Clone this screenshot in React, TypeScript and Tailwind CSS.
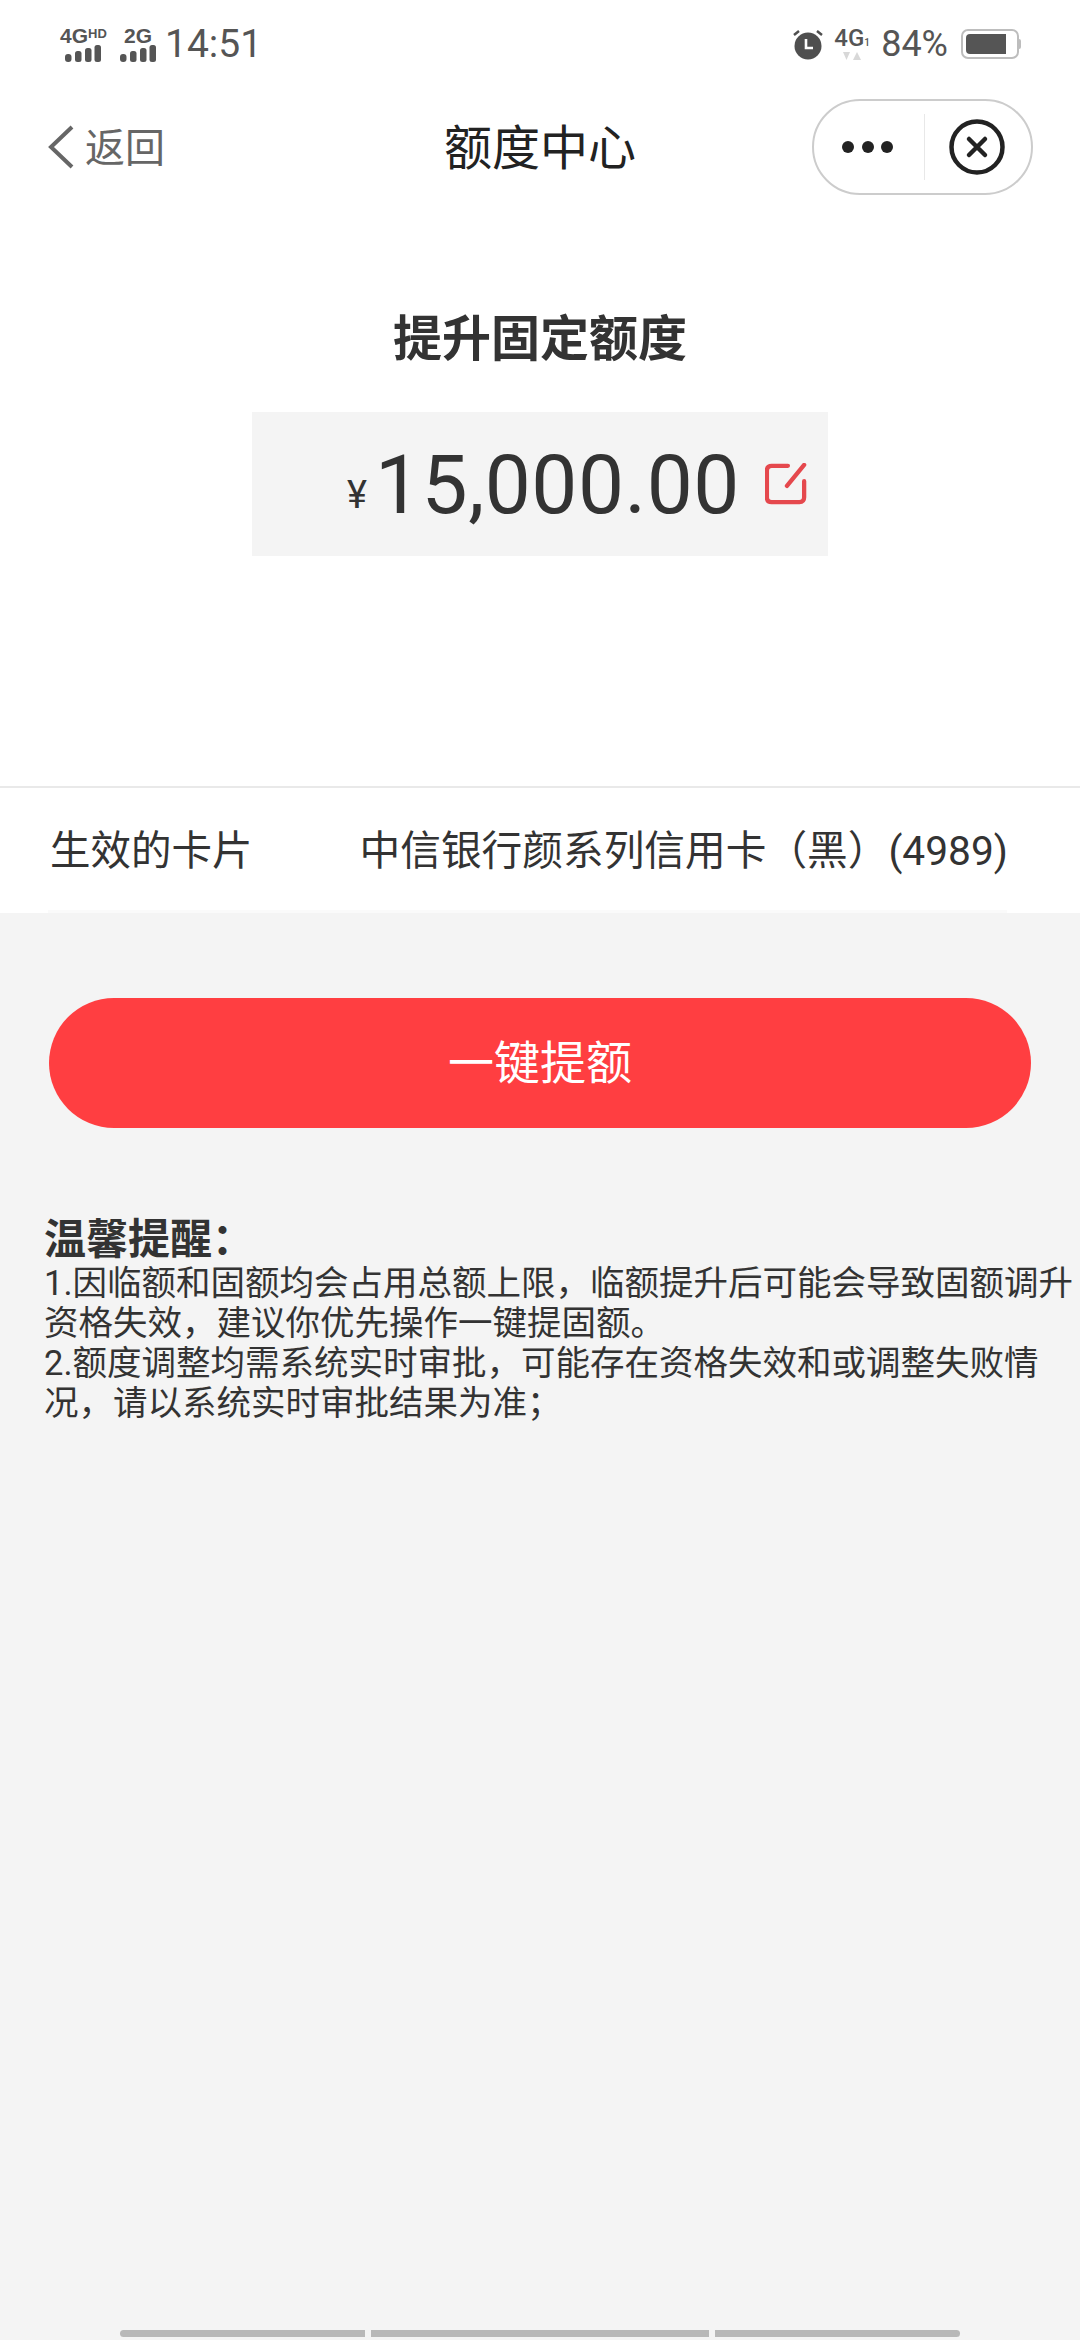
import React from "react";

const CJK = "font-['Roboto','Noto_Sans_CJK_SC',sans-serif]";

function Bars({ className }: { className?: string }) {
  return (
    <svg width="36" height="17" viewBox="0 0 36 17" className={className}>
      <rect x="0" y="9" width="6.5" height="8" rx="3" fill="#555" />
      <rect x="10" y="6" width="6.5" height="11" rx="2.5" fill="#555" />
      <rect x="20" y="3" width="6.5" height="14" rx="2.5" fill="#555" />
      <rect x="29.5" y="0" width="6.5" height="17" rx="2.5" fill="#555" />
    </svg>
  );
}

function Alarm() {
  return (
    <svg width="30" height="33" viewBox="0 0 30 33">
      <circle cx="15" cy="18" r="13.5" fill="#4f4f4f" />
      <path d="M1 7 L6 3 M29 7 L24 3" stroke="#4f4f4f" strokeWidth="2.5" />
      <path d="M13 11 V20 H20" stroke="#fff" strokeWidth="2.6" fill="none" />
    </svg>
  );
}

function Battery() {
  return (
    <div className="flex items-center">
      <div className="w-[58px] h-[30px] border-2 border-[#bdbdbd] rounded-[7px] p-[3px] pr-[11px]">
        <div className="h-full bg-[#555] rounded-l-[4px]" />
      </div>
      <div className="w-[2px] h-[10px] bg-[#bdbdbd] rounded-r-sm" />
    </div>
  );
}

export default function App() {
  return (
    <div className={`w-[1080px] h-[2340px] bg-[#f4f4f4] flex flex-col ${CJK}`}>
      <div className="bg-white h-[913px] flex flex-col shrink-0">
        {/* status bar */}
        <div className="h-[85px] pl-[60px] pr-[60px] flex items-start justify-between pt-[24px]">
          <div className="flex items-center">
            <div className="flex flex-col items-start w-[46px]">
              <div className="flex items-start h-[17px] leading-[17px] text-[#555] font-bold text-[21px] font-['Liberation_Sans']">
                4G<span className="text-[13px] leading-[13px]">HD</span>
              </div>
              <Bars className="mt-[1px] ml-[5px]" />
            </div>
            <div className="flex flex-col items-center w-[36px] ml-[14px]">
              <div className="h-[17px] leading-[17px] text-[#555] font-bold text-[21px] font-['Liberation_Sans']">2G</div>
              <Bars className="mt-[1px]" />
            </div>
            <span className="ml-[9px] text-[39px] leading-[40px] text-[#555]">14:51</span>
          </div>
          <div className="flex items-center">
            <Alarm />
            <div className="ml-[12px] flex flex-col items-center w-[34px]">
              <div className="flex items-end h-[22px] leading-[22px] text-[#555] text-[24px] font-medium">
                4G<span className="text-[10px] leading-[12px]">1</span>
              </div>
              <svg width="20" height="9" viewBox="0 0 20 9" className="mt-[3px]">
                <path d="M1 0 H8 L4.5 8 Z M11 8 L15 0 L19 8 Z" fill="#d8d8d8" />
              </svg>
            </div>
            <span className="ml-[12px] text-[36px] leading-[40px] text-[#555]">84%</span>
            <div className="ml-[13px] mr-[-1px]">
              <Battery />
            </div>
          </div>
        </div>
        {/* nav */}
        <div className="h-[96px] mt-[14px] pl-[47px] pr-[47px] grid grid-cols-[1fr_auto_1fr] items-center">
          <div className="flex items-center">
            <svg width="28" height="44" viewBox="0 0 28 44">
              <path d="M25 2 L4 22 L25 42" stroke="#666" strokeWidth="4" fill="none" />
            </svg>
            <span className="ml-[10px] text-[40px] text-[#666] leading-[48px] mt-[3px]">返回</span>
          </div>
          <div className="text-[48px] text-[#222] leading-[56px] mt-[3px]">额度中心</div>
          <div className="justify-self-end w-[221px] h-[96px] rounded-full border-2 border-[#cccccc] flex items-center">
            <svg width="110" height="20" viewBox="0 0 110 20" className="shrink-0">
              <circle cx="34" cy="10" r="6" fill="#222" />
              <circle cx="54" cy="10" r="6" fill="#222" />
              <circle cx="73" cy="10" r="6" fill="#222" />
            </svg>
            <div className="w-[1px] h-[66px] bg-[#e8e8e8]" />
            <svg width="56" height="56" viewBox="0 0 56 56" className="ml-[24px] shrink-0">
              <circle cx="28" cy="28" r="25.5" stroke="#222" strokeWidth="4.5" fill="none" />
              <path d="M20 20 L36 36 M36 20 L20 36" stroke="#222" strokeWidth="4.5" strokeLinecap="round" />
            </svg>
          </div>
        </div>
        {/* title */}
        <div className="mt-[115px] text-center text-[49px] leading-[60px] font-bold text-[#333]">提升固定额度</div>
        <div className="mt-[42px] mx-auto w-[576px] h-[144px] bg-[#f4f4f4] flex items-center pl-[95px]">
          <span className="text-[38px] leading-[44px] text-[#333] mt-[22px]">¥</span>
          <span className="ml-[8px] mt-[1px] text-[82px] leading-[90px] tracking-[0.5px] font-normal text-[#333] font-['Roboto']">15,000.00</span>
          <svg width="42" height="42" viewBox="0 0 44 44" className="ml-[25px]">
            <path
              d="M24 3 H7 Q2 3 2 8 V36 Q2 41 7 41 H36 Q41 41 41 36 V19"
              stroke="#e5484d"
              strokeWidth="4.5"
              fill="none"
              strokeLinecap="round"
            />
            <path d="M23 24 L41 2" stroke="#e5484d" strokeWidth="4.5" strokeLinecap="round" />
          </svg>
        </div>
        {/* card row */}
        <div className="mt-[230px] border-t-2 border-[#e9e9e9] flex-1 flex flex-col">
          <div className="flex-1 pl-[50px] pr-[72px] pt-[3px] flex items-center justify-between">
            <span className="text-[40.5px] leading-[48px] text-[#333]">生效的卡片</span>
            <span className="text-[40.7px] leading-[48px] text-[#333] whitespace-nowrap">中信银行颜系列信用卡（黑）(4989)</span>
          </div>
          <div className="h-[3px] ml-[48px] mr-[73px] bg-[#fafafa]" />
        </div>
      </div>
      {/* button */}
      <div className="mt-[85px] mx-[49px] h-[130px] rounded-full bg-[#ff3e41] flex items-center justify-center text-white text-[46px]">
        一键提额
      </div>
      {/* notes */}
      <div className="mt-[88px] pl-[44px] text-[#333]">
        <div className="text-[42px] leading-[48px] font-bold">温馨提醒：</div>
        <div className="text-[34.5px] leading-[40px] mt-[-1px]">
          <p className="whitespace-nowrap">1.因临额和固额均会占用总额上限，临额提升后可能会导致固额调升</p>
          <p>资格失效，建议你优先操作一键提固额。</p>
          <p className="whitespace-nowrap">2.额度调整均需系统实时审批，可能存在资格失效和或调整失败情</p>
          <p>况，请以系统实时审批结果为准；</p>
        </div>
      </div>
      {/* bottom bar */}
      <div className="mt-auto mb-[3px] mx-[120px] flex gap-[6px] h-[7px]">
        <div className="w-[245px] bg-[#b8b8b8] rounded-l-full" />
        <div className="w-[338px] bg-[#b8b8b8]" />
        <div className="w-[245px] bg-[#b8b8b8] rounded-r-full" />
      </div>
    </div>
  );
}
